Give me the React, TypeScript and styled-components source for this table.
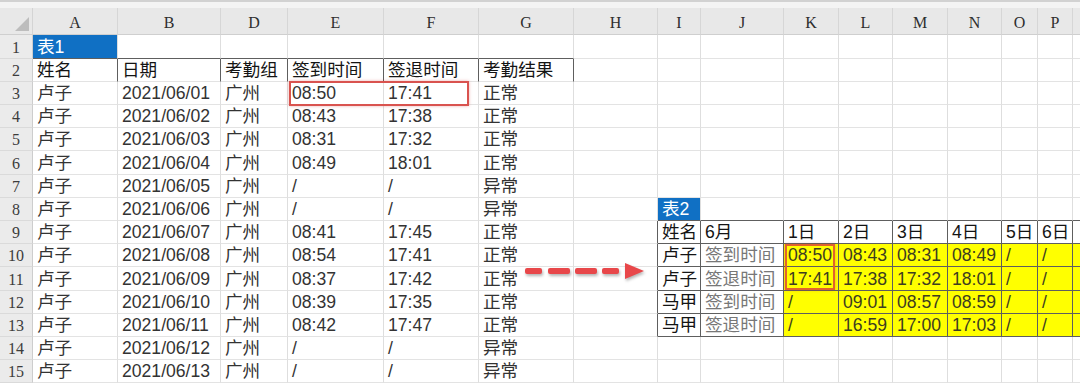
import React from "react";
import styled, { createGlobalStyle } from "styled-components";

const Global = createGlobalStyle`
  html, body { margin: 0; padding: 0; background: #ffffff; overflow: hidden; }
  #root { width: 1080px; height: 383px; }
`;

const COLS = [85, 103, 67, 96, 95, 95, 84, 43, 83, 55, 54, 55, 54, 36, 35, 80];
const LETTERS = ["A", "B", "D", "E", "F", "G", "H", "I", "J", "K", "L", "M", "N", "O", "P", ""];
const ROW_H = [24, 23, 23, 23, 23, 24, 23, 23, 23, 23, 24, 23, 23, 23, 23];

type Kind = "title" | "head" | "data" | "sub" | "yellow";
type CellData = { text: string; kind: Kind };

const Sheet = styled.div`
  position: relative;
  width: 1080px;
  height: 383px;
  overflow: hidden;
  background: #ffffff;
`;

const TopStrip = styled.div`
  height: 6px;
  background: #f4f4f4;
  border-top: 2px solid #d2d2d2;
`;

const Grid = styled.div`
  display: grid;
  grid-template-columns: 33px ${COLS.map((w) => `${w}px`).join(" ")};
  grid-template-rows: 27px ${ROW_H.map((h) => `${h}px`).join(" ")};
`;

const Corner = styled.div`
  position: relative;
  background: #e8e8e8;
  border-right: 1px solid #d4d4d4;
  border-bottom: 1px solid #cfcfcf;
  box-sizing: border-box;
  &::after {
    content: "";
    position: absolute;
    right: 3px;
    bottom: 3px;
    width: 0;
    height: 0;
    border-left: 14px solid transparent;
    border-bottom: 14px solid #bdbdbd;
  }
`;

const ColHead = styled.div`
  box-sizing: border-box;
  background: #e8e8e8;
  border-right: 1px solid #d6d6d6;
  border-bottom: 1px solid #cfcfcf;
  display: flex;
  align-items: center;
  justify-content: center;
  padding-top: 3px;
  font-family: "Liberation Serif", "DejaVu Serif", serif;
  font-size: 16px;
  color: #2e2e2e;
`;

const RowHead = styled.div`
  box-sizing: border-box;
  background: #ebebeb;
  border-right: 1px solid #cdcdcd;
  border-bottom: 1px solid #dadada;
  display: flex;
  align-items: center;
  justify-content: center;
  padding-top: 2px;
  font-family: "Liberation Serif", "DejaVu Serif", serif;
  font-size: 16px;
  color: #3c3c3c;
`;

const Cell = styled.div<{ $bg: string; $color: string; $dr: boolean; $db: boolean }>`
  box-sizing: border-box;
  background: ${(p) => p.$bg};
  color: ${(p) => p.$color};
  border-right: 1px solid ${(p) => (p.$dr ? "#5e5e5e" : "#dedede")};
  border-bottom: 1px solid ${(p) => (p.$db ? "#5e5e5e" : "#e3e3e3")};
  display: flex;
  align-items: center;
  padding: 2px 0 0 4px;
  white-space: nowrap;
  overflow: hidden;
  font-family: "Liberation Sans", "Noto Sans CJK SC", sans-serif;
  font-size: 17.6px;
  line-height: 1;
`;

const Highlight = styled.div<{ $color: string }>`
  position: absolute;
  box-sizing: border-box;
  border: 2px solid ${(p) => p.$color};
  box-shadow: 0 0 3px rgba(200, 40, 40, 0.35);
  pointer-events: none;
`;

const Arrow = styled.svg`
  position: absolute;
  left: 520px;
  top: 261px;
  overflow: visible;
  filter: drop-shadow(1px 2px 1.5px rgba(0, 0, 0, 0.3));
`;

const KIND_STYLE: Record<Kind, { bg: string; color: string }> = {
  title: { bg: "#1070c4", color: "#ffffff" },
  head: { bg: "#ffffff", color: "#141414" },
  data: { bg: "#ffffff", color: "#333333" },
  sub: { bg: "#ffffff", color: "#777777" },
  yellow: { bg: "#ffff00", color: "#3d3d20" },
};

const left: string[][] = [
  ["2021/06/01", "08:50", "17:41", "正常"],
  ["2021/06/02", "08:43", "17:38", "正常"],
  ["2021/06/03", "08:31", "17:32", "正常"],
  ["2021/06/04", "08:49", "18:01", "正常"],
  ["2021/06/05", "/", "/", "异常"],
  ["2021/06/06", "/", "/", "异常"],
  ["2021/06/07", "08:41", "17:45", "正常"],
  ["2021/06/08", "08:54", "17:41", "正常"],
  ["2021/06/09", "08:37", "17:42", "正常"],
  ["2021/06/10", "08:39", "17:35", "正常"],
  ["2021/06/11", "08:42", "17:47", "正常"],
  ["2021/06/12", "/", "/", "异常"],
  ["2021/06/13", "/", "/", "异常"],
];

const right: { name: string; sub: string; vals: string[] }[] = [
  { name: "卢子", sub: "签到时间", vals: ["08:50", "08:43", "08:31", "08:49", "/", "/", ""] },
  { name: "卢子", sub: "签退时间", vals: ["17:41", "17:38", "17:32", "18:01", "/", "/", ""] },
  { name: "马甲", sub: "签到时间", vals: ["/", "09:01", "08:57", "08:59", "/", "/", ""] },
  { name: "马甲", sub: "签退时间", vals: ["/", "16:59", "17:00", "17:03", "/", "/", ""] },
];

function buildGrid(): (CellData | null)[][] {
  const g: (CellData | null)[][] = [];
  for (let r = 0; r <= 16; r++) g.push(new Array(16).fill(null));
  g[1][0] = { text: "表1", kind: "title" };
  ["姓名", "日期", "考勤组", "签到时间", "签退时间", "考勤结果"].forEach((t, c) => {
    g[2][c] = { text: t, kind: "head" };
  });
  left.forEach((row, i) => {
    const r = 3 + i;
    g[r][0] = { text: "卢子", kind: "data" };
    g[r][1] = { text: row[0], kind: "data" };
    g[r][2] = { text: "广州", kind: "data" };
    g[r][3] = { text: row[1], kind: "data" };
    g[r][4] = { text: row[2], kind: "data" };
    g[r][5] = { text: row[3], kind: "data" };
  });
  g[8][7] = { text: "表2", kind: "title" };
  ["姓名", "6月", "1日", "2日", "3日", "4日", "5日", "6日", ""].forEach((t, i) => {
    g[9][7 + i] = { text: t, kind: "head" };
  });
  right.forEach((row, i) => {
    const r = 10 + i;
    g[r][7] = { text: row.name, kind: "head" };
    g[r][8] = { text: row.sub, kind: "sub" };
    row.vals.forEach((v, j) => {
      g[r][9 + j] = { text: v, kind: "yellow" };
    });
  });
  return g;
}

const inT1Head = (r: number, c: number) => r === 2 && c >= 0 && c <= 5;
const inT2 = (r: number, c: number) => r >= 9 && r <= 13 && c >= 7 && c <= 15;
const bordered = (r: number, c: number) => inT1Head(r, c) || inT2(r, c);
const darkRight = (r: number, c: number) => bordered(r, c) || bordered(r, c + 1);
const darkBottom = (r: number, c: number) => inT2(r, c) || bordered(r + 1, c);

export default function App() {
  const g = buildGrid();
  return (
    <Sheet>
      <Global />
      <TopStrip />
      <Grid>
        <Corner />
        {LETTERS.map((l, i) => (
          <ColHead key={i}>{l}</ColHead>
        ))}
        {ROW_H.map((_, i) => {
          const r = i + 1;
          return (
            <React.Fragment key={r}>
              <RowHead>{r}</RowHead>
              {COLS.map((_, c) => {
                const d = g[r][c];
                const ks = KIND_STYLE[d ? d.kind : "data"];
                return (
                  <Cell key={c} $bg={ks.bg} $color={ks.color} $dr={darkRight(r, c)} $db={darkBottom(r, c)}>
                    {d ? d.text : ""}
                  </Cell>
                );
              })}
            </React.Fragment>
          );
        })}
      </Grid>
      <Highlight $color="#d9534f" style={{ left: 289, top: 81, width: 180, height: 25 }} />
      <Highlight $color="#e0622e" style={{ left: 785, top: 244, width: 50, height: 46 }} />
      <Arrow width="130" height="20" viewBox="0 0 130 20">
        <g fill="#e8474a">
          <rect x="5" y="7" width="17" height="6" rx="2" />
          <rect x="28" y="7" width="22" height="6" rx="2" />
          <rect x="55" y="7" width="22" height="6" rx="2" />
          <rect x="82" y="7" width="17" height="6" rx="2" />
          <polygon points="105,2 124,10 105,18" />
        </g>
      </Arrow>
    </Sheet>
  );
}
